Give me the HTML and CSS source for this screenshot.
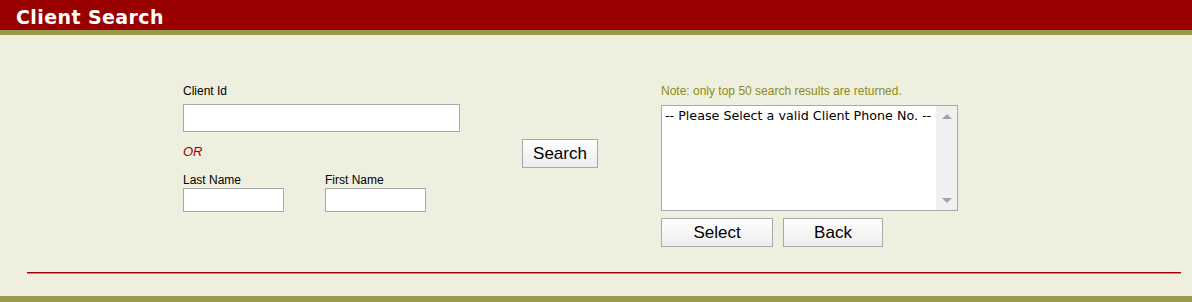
FILE: index.html
```html
<!DOCTYPE html>
<html>
<head>
<meta charset="utf-8">
<link rel="stylesheet" href="styles.css">
</head>
<body>
<div class="page">
  <div class="header"><h1 class="title">Client Search</h1></div>
  <div class="main">
    <div class="form">
      <div class="col-left">
        <div class="label">Client Id</div>
        <div class="input input-id"></div>
        <div class="or">OR</div>
        <div class="names">
          <div class="name-field">
            <div class="label">Last Name</div>
            <div class="input input-name"></div>
          </div>
          <div class="name-field">
            <div class="label">First Name</div>
            <div class="input input-name"></div>
          </div>
        </div>
      </div>
      <div class="col-mid">
        <button class="btn btn-search">Search</button>
      </div>
      <div class="col-right">
        <div class="note">Note: only top 50 search results are returned.</div>
        <div class="listbox">
          <div class="list-items">-- Please Select a valid Client Phone No. --</div>
          <div class="scrollbar">
            <span class="arrow-up"></span>
            <span class="arrow-down"></span>
          </div>
        </div>
        <div class="actions">
          <button class="btn btn-select">Select</button>
          <button class="btn btn-back">Back</button>
        </div>
      </div>
    </div>
    <div class="rule"></div>
  </div>
  <div class="footer"></div>
</div>
</body>
</html>
```

FILE: styles.css
```css
html, body {
  margin: 0;
  padding: 0;
  background: #efefe0;
}
.page {
  width: 1192px;
  height: 302px;
  display: flex;
  flex-direction: column;
  font-family: "Liberation Sans", Arial, sans-serif;
}
.header {
  height: 30px;
  background: #990000;
  border-bottom: 5px solid #999a4a;
  box-sizing: content-box;
}
.title {
  margin: 0 0 0 16px;
  padding-top: 5px;
  font-family: "DejaVu Sans", Verdana, sans-serif;
  font-weight: bold;
  font-size: 19px;
  letter-spacing: 0.4px;
  color: #ffffff;
  line-height: 25px;
}
.main {
  flex: 1;
  display: flex;
  flex-direction: column;
}
.form {
  display: flex;
  padding: 49px 0 0 183px;
  height: 188px;
}
.col-left {
  width: 277px;
  display: flex;
  flex-direction: column;
}
.label {
  font-size: 12px;
  line-height: 14px;
  color: #000;
}
.input {
  background: #fff;
  border: 1px solid #a9a9a9;
  box-sizing: border-box;
}
.input-id {
  margin-top: 6px;
  width: 277px;
  height: 28px;
}
.or {
  margin-top: 13px;
  font-size: 13px;
  line-height: 14px;
  font-style: italic;
  color: #990000;
}
.names {
  margin-top: 14px;
  display: flex;
  gap: 41px;
}
.name-field .input-name {
  margin-top: 1px;
  width: 101px;
  height: 24px;
}
.col-mid {
  margin-left: 62px;
  padding-top: 55px;
}
.btn {
  font-family: "Liberation Sans", Arial, sans-serif;
  font-size: 17px;
  color: #000;
  background: linear-gradient(#ffffff, #ececec);
  border: 1px solid #a9a9a9;
  box-sizing: border-box;
  padding: 0;
  margin: 0;
}
.btn-search {
  width: 76px;
  height: 29px;
}
.col-right {
  margin-left: 63px;
  display: flex;
  flex-direction: column;
}
.note {
  font-size: 12px;
  line-height: 14px;
  color: #8c8c14;
}
.listbox {
  margin-top: 7px;
  width: 297px;
  height: 106px;
  border: 1px solid #a9a9a9;
  box-sizing: border-box;
  background: #fff;
  display: flex;
}
.list-items {
  flex: 1;
  font-family: "DejaVu Sans", Verdana, sans-serif;
  font-size: 12.7px;
  line-height: 15px;
  padding: 2px 0 0 3px;
  color: #000;
  white-space: nowrap;
}
.scrollbar {
  width: 21px;
  background: #f0f0f0;
  display: flex;
  flex-direction: column;
  justify-content: space-between;
  align-items: center;
  padding: 8px 0 7px;
}
.arrow-up {
  width: 0;
  height: 0;
  border-left: 5px solid transparent;
  border-right: 5px solid transparent;
  border-bottom: 5px solid #a3a3a3;
}
.arrow-down {
  width: 0;
  height: 0;
  border-left: 5px solid transparent;
  border-right: 5px solid transparent;
  border-top: 5px solid #a3a3a3;
}
.actions {
  margin-top: 7px;
  display: flex;
  gap: 10px;
}
.btn-select {
  width: 112px;
  height: 29px;
}
.btn-back {
  width: 100px;
  height: 29px;
}
.rule {
  margin: 0 11px 0 27px;
  height: 1px;
  background: #a00000;
  box-shadow: 0 1px 0 rgba(160, 0, 0, 0.45);
}
.footer {
  height: 6px;
  background: #999a4a;
}
```
